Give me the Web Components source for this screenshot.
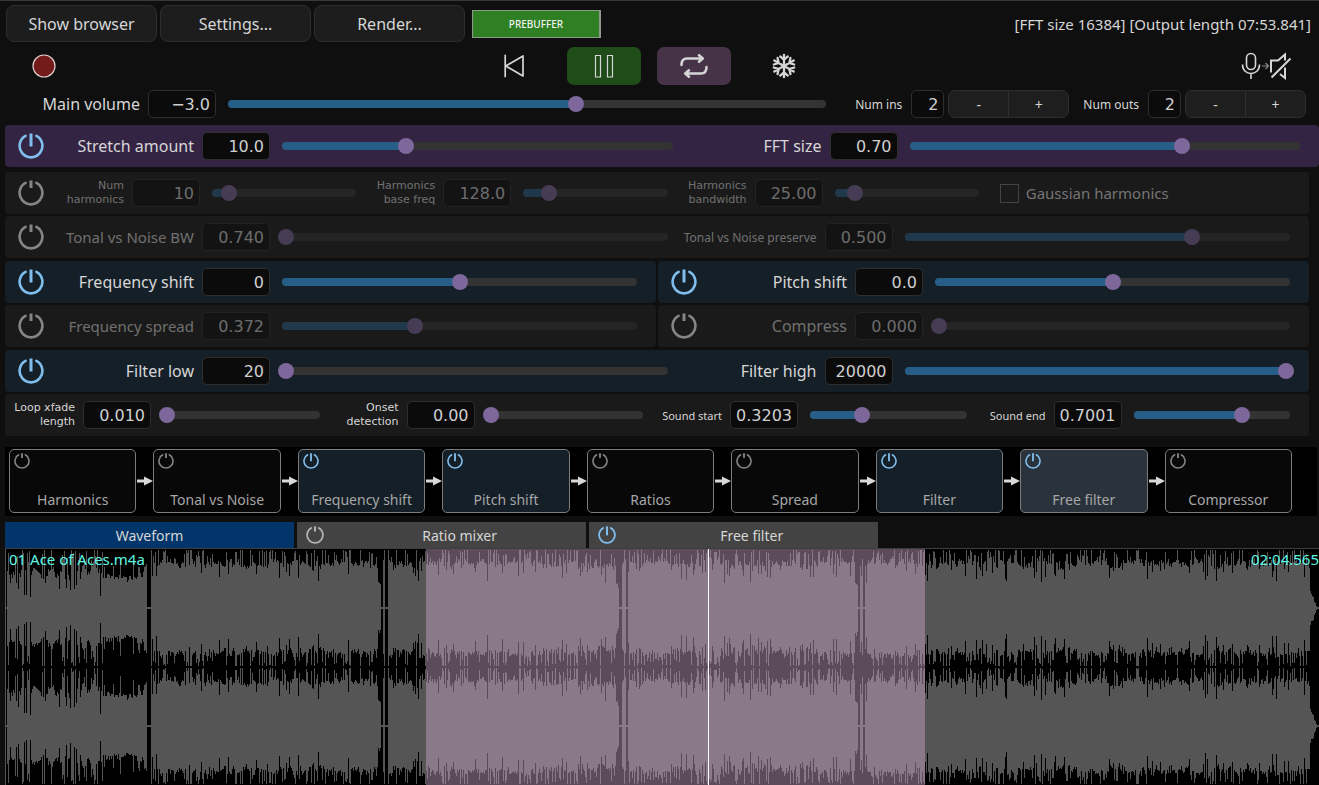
<!DOCTYPE html>
<html lang="en">
<head>
<meta charset="utf-8">
<meta name="viewport" content="width=device-width, initial-scale=1">
<title>Stretch</title>
<style>
  body {
    margin: 0;
    background: #0f0f0f;
    color: #d6d6d6;
    font-family: "Noto Sans", "Open Sans", sans-serif;
    font-size: 16px;
    --number-font: "DejaVu Sans", sans-serif;
    --line: #2e2e2e;
    --on: #7fbdec;
    --off: #858585;
  }
</style>
</head>
<body>
<stretch-app></stretch-app>

<script>
class PowerToggle extends HTMLElement {
  constructor() {
    super();
    this.attachShadow({ mode: "open" });
  }

  connectedCallback() {
    this.render();
  }

  render() {
    const on = this.hasAttribute("on");
    const name = this.getAttribute("name") || "Power";

    this.shadowRoot.innerHTML = `
      <style>
        :host {
          display: block;
          width: var(--power-size, 26px);
          height: var(--power-size, 26px);
          color: var(--off);
        }

        :host([on]) {
          color: var(--on);
        }

        button {
          display: block;
          width: 100%;
          height: 100%;
          padding: 0;
          border: 0;
          background: none;
          color: inherit;
        }

        svg {
          display: block;
          width: 100%;
          height: 100%;
        }
      </style>
      <button type="button" aria-label="${name}" aria-pressed="${on}">
        <svg viewBox="0 0 26 26" fill="none" stroke="currentColor" stroke-width="2.6">
          <path d="M7.6 2.9A11.4 11.4 0 1 0 18.4 2.9" stroke-linecap="round"/>
          <path d="M13 0.5V${on ? 13.5 : 8}" stroke-width="3"/>
        </svg>
      </button>
    `;

    this.shadowRoot.querySelector("button").addEventListener("click", () => {
      this.toggleAttribute("on");
      this.render();
    });
  }
}

class ParamField extends HTMLElement {
  constructor() {
    super();
    this.attachShadow({ mode: "open" });
  }

  connectedCallback() {
    this.render();
    const range = this.shadowRoot.querySelector(".range");
    range.addEventListener("input", () => {
      this.shadowRoot.querySelector(".slider").style.setProperty("--pos", range.value / 1000);
    });
  }

  render() {
    const value = this.getAttribute("value") || "0";
    const pos = Number(this.getAttribute("pos") || 0);
    const name = this.textContent.trim();

    this.shadowRoot.innerHTML = `
      <style>
        :host {
          display: flex;
          flex: 1;
          align-items: center;
          min-width: 0;
          padding-right: 12px;
          --label-width: 137px;
        }

        :host([off]) {
          opacity: 0.45;
        }

        :host([size="medium"]) {
          font-size: 15px;
        }

        :host([size="snug"]) {
          font-size: 12px;
        }

        :host([size="small"]) {
          --label-width: 67px;
          font-family: var(--number-font);
          font-size: 11px;
          line-height: 14px;
        }

        :host([size="tiny"]) {
          --label-width: 67px;
          font-size: 11px;
        }

        label {
          width: var(--label-width);
          flex: none;
          text-align: right;
          white-space: nowrap;
        }

        .value {
          box-sizing: border-box;
          flex: none;
          width: 68px;
          height: 28px;
          margin: 0 12px 0 8px;
          padding: 0 5px;
          border: 1px solid var(--line);
          border-radius: 5px;
          background: #0b0b0b;
          color: #cfcfcf;
          font: 16px var(--number-font);
          text-align: right;
        }

        .slider {
          display: grid;
          flex: 1;
          align-items: center;
          min-width: 0;
        }

        .track,
        .range {
          grid-area: 1 / 1;
        }

        .track {
          height: 8px;
          border-radius: 4px;
          background: #333;
          overflow: hidden;
        }

        .fill {
          width: calc(4px + (100% - 8px) * var(--pos));
          height: 100%;
          background: #265e88;
        }

        .range {
          appearance: none;
          height: 16px;
          margin: 0 -4px;
          background: none;
        }

        .range::-webkit-slider-thumb {
          appearance: none;
          width: 16px;
          height: 16px;
          border-radius: 50%;
          background: #7d679b;
        }
      </style>
      <label for="value"><slot></slot></label>
      <input class="value" id="value" type="text" value="${value}">
      <div class="slider" style="--pos: ${pos}">
        <div class="track"><div class="fill"></div></div>
        <input class="range" type="range" min="0" max="1000" value="${pos * 1000}" aria-label="${name}">
      </div>
    `;
  }
}

class ParamPanel extends HTMLElement {
  constructor() {
    super();
    this.attachShadow({ mode: "open" });
  }

  connectedCallback() {
    const kind = this.getAttribute("kind");
    const power = kind === "plain" ? "" :
      `<power-toggle name="${this.getAttribute("name")}" ${kind === "off" ? "" : "on"}></power-toggle>`;

    this.shadowRoot.innerHTML = `
      <style>
        :host {
          display: flex;
          flex: 1 1 0;
          align-items: center;
          min-width: 0;
          height: 42px;
          padding-right: 7px;
          box-sizing: border-box;
          border-radius: 4px;
          background: #1a1a1a;
        }

        :host([kind="on"]) {
          background: #151f27;
        }

        :host([kind="main"]) {
          background: #342444;
        }

        :host([kind="plain"]) {
          padding-left: 3px;
        }

        power-toggle {
          flex: none;
          margin: 0 13px;
        }

        .fields {
          display: grid;
          flex: 1;
          grid-auto-flow: column;
          grid-auto-columns: minmax(0, 1fr);
          align-items: center;
        }
      </style>
      ${power}
      <div class="fields"><slot></slot></div>
    `;
  }
}

class NumStepper extends HTMLElement {
  constructor() {
    super();
    this.attachShadow({ mode: "open" });
  }

  connectedCallback() {
    this.render();
    const input = this.shadowRoot.querySelector("input");
    this.shadowRoot.querySelector(".minus").addEventListener("click", () => {
      input.value = Math.max(0, Number(input.value) - 1);
    });
    this.shadowRoot.querySelector(".plus").addEventListener("click", () => {
      input.value = Number(input.value) + 1;
    });
  }

  render() {
    this.shadowRoot.innerHTML = `
      <style>
        :host {
          display: flex;
          align-items: center;
          font-size: 12px;
        }

        input {
          box-sizing: border-box;
          width: 33px;
          height: 28px;
          margin: 0 4px 0 9px;
          padding: 0 5px;
          border: 1px solid var(--line);
          border-radius: 5px;
          background: #0b0b0b;
          color: #cfcfcf;
          font: 16px var(--number-font);
          text-align: right;
        }

        button {
          box-sizing: border-box;
          width: 61px;
          height: 28px;
          padding: 0;
          border: 1px solid var(--line);
          background: #1e1e1e;
          color: inherit;
          font: 14px "Noto Sans", sans-serif;
        }

        .minus {
          border-radius: 7px 0 0 7px;
        }

        .plus {
          margin-left: -1px;
          border-radius: 0 7px 7px 0;
        }
      </style>
      <label for="count"><slot></slot></label>
      <input id="count" type="text" value="${this.getAttribute("value")}">
      <button class="minus" type="button">-</button>
      <button class="plus" type="button">+</button>
    `;
  }
}

class TopBar extends HTMLElement {
  constructor() {
    super();
    this.attachShadow({ mode: "open" });
    this.shadowRoot.innerHTML = `
      <style>
        :host {
          display: flex;
          align-items: center;
          gap: 3px;
          padding: 4px 8px 5px 1px;
        }

        button {
          box-sizing: border-box;
          width: 151px;
          height: 37px;
          padding: 0;
          border: 1px solid var(--line);
          border-radius: 8px;
          background: #1d1d1d;
          color: inherit;
          font: inherit;
        }

        .meter {
          box-sizing: border-box;
          width: 129px;
          height: 28px;
          margin-left: 4px;
          border: 1px solid #8f9a8c;
          border-right-width: 2px;
          background: #2f8023;
          color: #f2f2f2;
          font-size: 10px;
          font-weight: 500;
          line-height: 26px;
          text-align: center;
        }

        .info {
          margin-left: auto;
          font-size: 15px;
        }
      </style>
      <button type="button">Show browser</button>
      <button type="button">Settings...</button>
      <button type="button">Render...</button>
      <div class="meter">PREBUFFER</div>
      <div class="info">[FFT size 16384] [Output length 07:53.841]</div>
    `;
  }
}

class TransportBar extends HTMLElement {
  constructor() {
    super();
    this.attachShadow({ mode: "open" });
    this.shadowRoot.innerHTML = `
      <style>
        :host {
          display: grid;
          grid-template-columns: 1fr auto 1fr;
          align-items: center;
          padding: 0 28px 5px 2px;
        }

        .group {
          display: flex;
          gap: 16px;
        }

        button {
          display: grid;
          place-items: center;
          width: 74px;
          height: 38px;
          padding: 0;
          border: 0;
          border-radius: 7px;
          background: none;
          color: #d6d6d6;
        }

        .play {
          background: #1f4c19;
        }

        .loop {
          background: #463347;
        }

        .monitor {
          width: 50px;
          margin-left: auto;
        }

        svg {
          fill: none;
          stroke: currentColor;
        }
      </style>
      <button type="button" aria-label="Record">
        <svg width="24" height="24" viewBox="0 0 24 24">
          <circle cx="12" cy="12" r="11" fill="#731b1b" stroke="#e0cfcf" stroke-width="1.2"/>
        </svg>
      </button>
      <div class="group">
        <button type="button" aria-label="Rewind">
          <svg width="24" height="24" viewBox="0 0 24 24" stroke-width="1.7">
            <path d="M3.2 0.8V23.2M3.8 12L21 2V22Z" stroke-linejoin="round"/>
          </svg>
        </button>
        <button class="play" type="button" aria-label="Pause">
          <svg width="24" height="24" viewBox="0 0 24 24" stroke-width="1.2">
            <path d="M3.5 1.5h5v21.5h-5zM15.5 1.5h5v21.5h-5z"/>
          </svg>
        </button>
        <button class="loop" type="button" aria-label="Loop">
          <svg width="28" height="24" viewBox="0 0 28 24" stroke-width="2.5" stroke-linecap="round" stroke-linejoin="round">
            <path d="M1.5 11C1.5 6.5 3.5 4.5 7 4.5H22.5M19 1.2L22.8 4.5L19 7.8"/>
            <path d="M26.5 13C26.5 17.5 24.5 19.5 21 19.5H5.5M9 16.2L5.2 19.5L9 22.8"/>
          </svg>
        </button>
        <button type="button" aria-label="Freeze">
          <svg width="26" height="26" viewBox="-13 -13 26 26" stroke-width="2.3" stroke-linecap="round">
            <defs>
              <path id="arm" d="M0 0V-11.2M-3.8 -9.6L0 -6.2L3.8 -9.6"/>
            </defs>
            <use href="#arm"/>
            <use href="#arm" transform="rotate(60)"/>
            <use href="#arm" transform="rotate(120)"/>
            <use href="#arm" transform="rotate(180)"/>
            <use href="#arm" transform="rotate(240)"/>
            <use href="#arm" transform="rotate(300)"/>
          </svg>
        </button>
      </div>
      <button class="monitor" type="button" aria-label="Mute while capturing">
        <svg width="50" height="28" viewBox="0 0 50 28" stroke-width="1.6">
          <rect x="5.5" y="1.5" width="9" height="16" rx="4.5"/>
          <path d="M1.5 12.5C1.5 24.5 18.5 24.5 18.5 12.5M10 21.5V27"/>
          <path d="M21 14h6.5M24.5 11l3 3l-3 3" stroke="#8a8a8a" stroke-width="1.2"/>
          <path d="M30 20.5V8.5H37L44 2.5V8.5M44 15.5V26L39 22M49.5 6.5L30.5 25.5" stroke-width="2"/>
        </svg>
      </button>
    `;
  }
}

class ChainNode extends HTMLElement {
  constructor() {
    super();
    this.attachShadow({ mode: "open" });
  }

  connectedCallback() {
    const on = this.hasAttribute("on") ? "on" : "";

    this.shadowRoot.innerHTML = `
      <style>
        :host {
          display: flex;
          flex: 1 1 0;
          flex-direction: column;
          justify-content: space-between;
          min-width: 0;
          height: 64px;
          box-sizing: border-box;
          padding: 3px 4px 2px;
          border: 1px solid #7c7c7c;
          border-radius: 5px;
          background: #080808;
          color: #a6a6a6;
          font-size: 14px;
          line-height: 20px;
          text-align: center;
          --power-size: 16px;
        }

        :host([on]) {
          background: #151f27;
        }

        :host([selected]) {
          background: #2a333b;
        }
      </style>
      <power-toggle name="${this.textContent}" ${on}></power-toggle>
      <div><slot></slot></div>
    `;
  }
}

class SignalChain extends HTMLElement {
  constructor() {
    super();
    this.attachShadow({ mode: "open" });
    const nodes = [
      ["Harmonics", ""],
      ["Tonal vs Noise", ""],
      ["Frequency shift", "on"],
      ["Pitch shift", "on"],
      ["Ratios", ""],
      ["Spread", ""],
      ["Filter", "on"],
      ["Free filter", "on selected"],
      ["Compressor", ""],
    ];
    const arrow = `
      <svg width="17" height="10" viewBox="0 0 17 10" fill="#d9d9d9">
        <path d="M1 3.5H8V0.5L17 5L8 9.5V6.5H1Z"/>
      </svg>`;

    this.shadowRoot.innerHTML = `
      <style>
        :host {
          display: flex;
          align-items: center;
          margin: 11px 2px 6px 0;
          padding: 2px 25px 3px 4px;
          background: #000;
        }

        svg {
          flex: none;
        }
      </style>
      ${nodes.map(([name, state]) => `<chain-node ${state}>${name}</chain-node>`).join(arrow)}
    `;
  }
}

class ViewTab extends HTMLElement {
  constructor() {
    super();
    this.attachShadow({ mode: "open" });
  }

  connectedCallback() {
    const power = this.getAttribute("power");
    const name = this.textContent;

    this.shadowRoot.innerHTML = `
      <style>
        :host {
          display: flex;
          flex: 0 0 22%;
          align-items: center;
          height: 26px;
          background: #434343;
          font-size: 14px;
          --power-size: 18px;
          --off: #b0b0b0;
        }

        :host([active]) {
          background: #02356a;
        }

        power-toggle {
          flex: none;
          margin: 0 9px;
        }

        .tab {
          flex: 1;
          height: 100%;
          padding: 0;
          border: 0;
          background: none;
          color: inherit;
          font: inherit;
        }
      </style>
      ${power ? `<power-toggle name="${name}" ${power === "on" ? "on" : ""}></power-toggle>` : ""}
      <button class="tab" type="button"><slot></slot></button>
    `;
  }
}

class WaveView extends HTMLElement {
  constructor() {
    super();
    this.attachShadow({ mode: "open" });
  }

  connectedCallback() {
    this.render();
  }

  // peak level of one column, 0 to 59
  level(x, body, rand) {
    const r = rand();
    const s = rand();
    if (x < 2) return 1;
    if (x >= 1305) return Math.max(1, 14 - (x - 1305) * 2);
    const gaps = [[142, 145], [376, 377], [380, 382], [614, 616], [621, 622], [853, 854], [858, 859]];
    if (gaps.some(([from, to]) => x >= from && x <= to)) return 1;
    if (x === 146 || x === 379 || x === 383) return 58;
    if ([373, 374, 375, 611, 612, 613, 850, 851, 852].includes(x)) return 14 + s * 12;

    if (x < 98) {
      if (r < 0.28) return 45 + s * 13;
      if (r < 0.42) return 10 + s * 12;
      return 24 + body * 17;
    }
    if (x < 142) {
      return r < 0.14 ? 36 + s * 10 : 25 + body * 8;
    }
    if (r < 0.26) return 49 + s * 9;
    if (r < 0.36) return 24 + s * 12;
    return 34 + body * 16;
  }

  channel(center) {
    let state = 29;
    const rand = () => {
      state = (state * 1664525 + 1013904223) % 4294967296;
      return state / 4294967296;
    };
    let d = "";
    let body = 0.5;
    for (let x = 0; x < 1314; x++) {
      body = body * 0.55 + rand() * 0.45;
      const level = this.level(x, body, rand);
      const jitter = level > 2 ? 5 : 0;
      const up = Math.min(58, level + rand() * jitter);
      const down = Math.min(58, level + rand() * jitter);
      d += `M${x} ${(center - up).toFixed(1)}h1V${(center + down).toFixed(1)}h-1z`;
    }
    return d;
  }

  render() {
    const start = Number(this.getAttribute("start")) * 100;
    const end = Number(this.getAttribute("end")) * 100;
    const play = Number(this.getAttribute("play")) * 100;

    this.shadowRoot.innerHTML = `
      <style>
        :host {
          display: block;
          position: relative;
          flex: 1;
          min-height: 236px;
          border-top: 1px solid #3d3d3d;
          background: #000;
          color: #5ff5e4;
          font-size: 15px;
          line-height: 20px;
          overflow: hidden;
        }

        svg {
          position: absolute;
          width: 100%;
          height: 100%;
        }

        .selection {
          position: absolute;
          top: 0;
          bottom: 0;
          left: ${start}%;
          width: ${end - start}%;
          background: rgba(200, 163, 196, 0.46);
        }

        .playhead {
          position: absolute;
          top: 0;
          bottom: 0;
          left: ${play}%;
          width: 1px;
          background: #fff;
        }

        .texts {
          position: relative;
          display: flex;
          justify-content: space-between;
          padding-left: 4px;
        }
      </style>
      <svg viewBox="0 0 1314 236" preserveAspectRatio="none" shape-rendering="crispEdges" fill="#555">
        <path d="${this.channel(59)}"/>
        <path d="${this.channel(177)}"/>
        <path d="M0 0h1V236H0z"/>
      </svg>
      <div class="selection"></div>
      <div class="playhead"></div>
      <div class="texts"><span>${this.getAttribute("file")}</span><span>${this.getAttribute("time")}</span></div>
    `;
  }
}

class StretchApp extends HTMLElement {
  constructor() {
    super();
    this.attachShadow({ mode: "open" });
    this.shadowRoot.innerHTML = `
      <style>
        :host {
          display: flex;
          flex-direction: column;
          box-sizing: border-box;
          min-height: 100vh;
          padding-left: 5px;
          border-top: 1px solid #383838;
        }

        .volume {
          display: flex;
          align-items: center;
          gap: 14px;
          padding: 0 13px 7px 0;
        }

        .volume param-field {
          --label-width: 135px;
          padding-right: 15px;
        }

        .panels {
          display: flex;
          flex-direction: column;
          gap: 3px;
          margin: 5px 10px 0 0;
        }

        .pair {
          display: grid;
          gap: 2px;
        }

        .split {
          display: flex;
          gap: 2px;
        }

        .check {
          display: flex;
          align-items: center;
          gap: 7px;
          padding-left: 9px;
          color: #757575;
          font-size: 15px;
          white-space: nowrap;
        }

        .check input {
          appearance: none;
          box-sizing: border-box;
          width: 19px;
          height: 19px;
          margin: 0;
          border: 1px solid #444;
        }

        .tabs {
          display: flex;
          gap: 3px;
        }
      </style>
      <top-bar></top-bar>
      <transport-bar></transport-bar>
      <div class="volume">
        <param-field value="−3.0" pos="0.582">Main volume</param-field>
        <num-stepper value="2">Num ins</num-stepper>
        <num-stepper value="2">Num outs</num-stepper>
      </div>
      <div class="split">
        <param-panel kind="main" name="Stretch">
          <param-field value="10.0" pos="0.313">Stretch amount</param-field>
          <param-field value="0.70" pos="0.701">FFT size</param-field>
        </param-panel>
      </div>
      <div class="panels">
        <div class="pair">
          <param-panel kind="off" name="Harmonics">
            <param-field off size="small" value="10" pos="0.092">Num<br>harmonics</param-field>
            <param-field off size="small" value="128.0" pos="0.16">Harmonics<br>base freq</param-field>
            <param-field off size="small" value="25.00" pos="0.121">Harmonics<br>bandwidth</param-field>
            <label class="check"><input type="checkbox">Gaussian harmonics</label>
          </param-panel>
          <param-panel kind="off" name="Tonal vs Noise">
            <param-field off size="medium" value="0.740" pos="0">Tonal vs Noise BW</param-field>
            <param-field off size="snug" value="0.500" pos="0.75">Tonal vs Noise preserve</param-field>
          </param-panel>
        </div>
        <div class="pair">
          <div class="split">
            <param-panel kind="on" name="Frequency shift">
              <param-field value="0" pos="0.5">Frequency shift</param-field>
            </param-panel>
            <param-panel kind="on" name="Pitch shift">
              <param-field value="0.0" pos="0.5">Pitch shift</param-field>
            </param-panel>
          </div>
          <div class="split">
            <param-panel kind="off" name="Frequency spread">
              <param-field off size="medium" value="0.372" pos="0.373">Frequency spread</param-field>
            </param-panel>
            <param-panel kind="off" name="Compress">
              <param-field off value="0.000" pos="0">Compress</param-field>
            </param-panel>
          </div>
        </div>
        <div class="pair">
          <param-panel kind="on" name="Filter">
            <param-field value="20" pos="0">Filter low</param-field>
            <param-field value="20000" pos="1">Filter high</param-field>
          </param-panel>
          <param-panel kind="plain">
            <param-field size="small" value="0.010" pos="0">Loop xfade<br>length</param-field>
            <param-field size="small" value="0.00" pos="0">Onset<br>detection</param-field>
            <param-field size="tiny" value="0.3203" pos="0.322">Sound start</param-field>
            <param-field size="tiny" value="0.7001" pos="0.701">Sound end</param-field>
          </param-panel>
        </div>
      </div>
      <signal-chain></signal-chain>
      <div class="tabs">
        <view-tab active>Waveform</view-tab>
        <view-tab power="off">Ratio mixer</view-tab>
        <view-tab power="on">Free filter</view-tab>
      </div>
      <wave-view file="01 Ace of Aces.m4a" time="02:04.565" start="0.3203" end="0.7001" play="0.535"></wave-view>
    `;
  }
}

customElements.define("power-toggle", PowerToggle);
customElements.define("param-field", ParamField);
customElements.define("param-panel", ParamPanel);
customElements.define("num-stepper", NumStepper);
customElements.define("top-bar", TopBar);
customElements.define("transport-bar", TransportBar);
customElements.define("chain-node", ChainNode);
customElements.define("signal-chain", SignalChain);
customElements.define("view-tab", ViewTab);
customElements.define("wave-view", WaveView);
customElements.define("stretch-app", StretchApp);
</script>
</body>
</html>
